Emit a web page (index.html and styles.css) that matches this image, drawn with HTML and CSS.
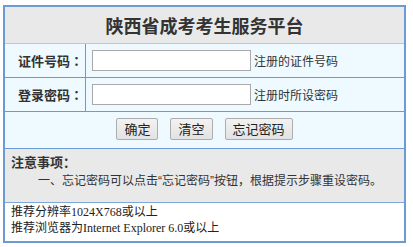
FILE: index.html
```html
<!DOCTYPE html>
<html lang="zh-CN">
<head>
  <meta charset="UTF-8" />
  <title>陕西省成考考生服务平台</title>
  <link rel="stylesheet" href="styles.css">
</head>
<body>
  <div class="login-box">
    <div class="login-title">陕西省成考考生服务平台</div>
    <form class="login-form" onsubmit="return false;">
      <div class="form-row">
        <label class="form-label" for="zjhm">证件号码<span class="colon">：</span></label>
        <div class="form-field">
          <input type="text" id="zjhm" class="text-input" />
          <span class="hint">注册的证件号码</span>
        </div>
      </div>
      <div class="form-row">
        <label class="form-label" for="dlmm">登录密码<span class="colon">：</span></label>
        <div class="form-field">
          <input type="password" id="dlmm" class="text-input" />
          <span class="hint">注册时所设密码</span>
        </div>
      </div>
      <div class="form-buttons">
        <button type="submit" class="btn">确定</button>
        <button type="reset" class="btn">清空</button>
        <button type="button" class="btn">忘记密码</button>
      </div>
    </form>
    <div class="notice">
      <div class="notice-title">注意事项<span class="colon">：</span></div>
      <div class="notice-item">一、忘记密码可以点击<span class="q">“</span>忘记密码<span class="q">”</span>按钮，根据提示步骤重设密码。</div>
    </div>
    <div class="footer-tips">
      推荐分辨率1024X768或以上<br>
      推荐浏览器为Internet Explorer 6.0或以上
    </div>
  </div>
</body>
</html>
```

FILE: styles.css
```css
body {
  margin: 0;
  padding: 0;
  background: #fff;
  color: #333;
  font-family: "Noto Sans CJK SC", "Noto Sans", sans-serif;
}
.login-box {
  width: 399px;
  margin: 5px 0 0 3px;
  border: 2px solid #6b9bd3;
}
.login-title {
  height: 36px;
  line-height: 36px;
  background: #e9e9e9;
  border-bottom: 1px solid #a7cdee;
  text-align: center;
  font-size: 18px;
  font-weight: bold;
  color: #333;
}
.form-row {
  display: grid;
  grid-template-columns: 80px 1fr;
  height: 33px;
  background: #eefaff;
  border-bottom: 1px solid #6b9bd3;
}
.form-label {
  display: flex;
  align-items: center;
  justify-content: flex-end;
  padding-right: 2px;
  font-size: 13px;
  font-weight: bold;
  color: #333;
}
.colon {
  font-family: "Noto Sans CJK TC", "Noto Sans CJK SC", sans-serif;
}
.form-field {
  display: flex;
  align-items: center;
  border-left: 1px solid #6b9bd3;
  padding-left: 6px;
}
.text-input {
  box-sizing: border-box;
  width: 159px;
  height: 21px;
  margin: 0;
  padding: 1px 3px;
  border: 1px solid #a9a9a9;
  background: #fff;
  font-size: 12px;
}
.hint {
  margin-left: 3px;
  font-size: 12px;
  color: #333;
}
.form-buttons {
  display: flex;
  justify-content: center;
  align-items: center;
  gap: 12px;
  height: 36px;
  background: #eefaff;
  border-bottom: 1px solid #6b9bd3;
}
.btn {
  box-sizing: border-box;
  height: 22px;
  margin-top: -2px;
  padding: 0 7px;
  border: 1px solid #adadad;
  border-radius: 2px;
  background: linear-gradient(#f2f2f2, #e2e2e2);
  font-family: "Noto Sans CJK SC", sans-serif;
  font-size: 13px;
  line-height: 20px;
  color: #222;
}
.notice {
  height: 50px;
  padding-top: 3px;
  background: #e9e9e9;
  border-bottom: 1px solid #7ea8da;
  font-size: 12px;
}
.notice-title {
  padding-left: 6px;
  font-size: 13px;
  line-height: 19px;
  font-weight: bold;
}
.notice-item {
  padding-left: 33px;
  line-height: 18px;
  color: #333;
}
.q {
  font-family: "Liberation Sans", sans-serif;
}
.footer-tips {
  height: 37px;
  padding: 1px 0 0 6px;
  font-family: "Liberation Serif", "Noto Sans CJK SC", serif;
  font-size: 12px;
  line-height: 16px;
  color: #222;
}
```
